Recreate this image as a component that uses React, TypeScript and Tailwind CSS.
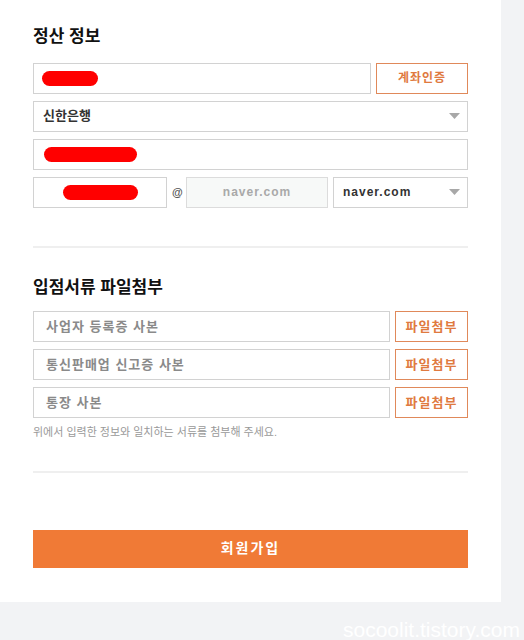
import React from 'react';

const font = { fontFamily: '"Liberation Sans", "Noto Sans CJK KR", sans-serif' };

function Redact({ w }: { w: string }) {
  return <span className={`block h-[15px] ${w} rounded-full bg-[#ff0000]`} />;
}

function Arrow() {
  return (
    <svg width="11" height="6" viewBox="0 0 11 6" className="shrink-0">
      <path d="M0 0 L11 0 L5.5 6 Z" fill="#a8a8a8" />
    </svg>
  );
}

function FileRow({ label }: { label: string }) {
  return (
    <div className="flex gap-[5px]">
      <div className="flex h-[31px] flex-1 items-center border border-[#d2d2d2] px-3 text-[13px] font-bold tracking-[1px] text-[#8a8a8a]">
        {label}
      </div>
      <button className="h-[31px] w-[73px] border border-[#e0895a] text-[13px] font-bold tracking-[1px] text-[#e07a40]">
        파일첨부
      </button>
    </div>
  );
}

export default function App() {
  return (
    <div className="h-[640px] w-[524px] overflow-hidden bg-[#f2f3f5]" style={font}>
      <div className="w-[501px] bg-white px-[33px] pt-[24px] pb-[34px]">
        {/* 정산 정보 */}
        <h2 className="text-[17px] font-bold text-[#111]">정산 정보</h2>
        <div className="mt-[13px] flex flex-col gap-[7px]">
          <div className="flex gap-[5px]">
            <div className="flex h-[31px] flex-1 items-center border border-[#d2d2d2] pl-[8px]">
              <Redact w="w-[56px]" />
            </div>
            <button className="h-[31px] w-[92px] border border-[#e0895a] text-[12px] font-bold tracking-[1px] text-[#e07a40]">
              계좌인증
            </button>
          </div>
          <div className="flex h-[31px] items-center justify-between border border-[#d2d2d2] pl-[9px] pr-[7px]">
            <span className="text-[13px] font-bold text-[#333]">신한은행</span>
            <Arrow />
          </div>
          <div className="flex h-[31px] items-center border border-[#d2d2d2] pl-[10px]">
            <Redact w="w-[93px]" />
          </div>
          <div className="flex items-center gap-[5px]">
            <div className="flex h-[31px] w-[134px] items-center border border-[#d2d2d2] pl-[29px]">
              <Redact w="w-[75px]" />
            </div>
            <span className="w-[9px] text-[11px] font-bold text-[#555]">@</span>
            <div className="flex h-[31px] w-[142px] items-center justify-center border border-[#dcdcdc] bg-[#f7f9f8] text-[12px] font-bold tracking-[1px] text-[#a9a9a9]">
              naver.com
            </div>
            <div className="flex h-[31px] flex-1 items-center justify-between border border-[#d2d2d2] pl-[9px] pr-[7px]">
              <span className="text-[12px] font-bold tracking-[1px] text-[#333]">naver.com</span>
              <Arrow />
            </div>
          </div>
        </div>

        <div className="mt-[38px] h-[2px] bg-[#efefef]" />

        {/* 입점서류 파일첨부 */}
        <h2 className="mt-[27px] text-[17px] font-bold text-[#111]">입점서류 파일첨부</h2>
        <div className="mt-[11px] flex flex-col gap-[7px]">
          <FileRow label="사업자 등록증 사본" />
          <FileRow label="통신판매업 신고증 사본" />
          <FileRow label="통장 사본" />
        </div>
        <p className="mt-[6px] text-[11px] text-[#999]">위에서 입력한 정보와 일치하는 서류를 첨부해 주세요.</p>

        <div className="mt-[30px] h-[2px] bg-[#efefef]" />

        <button className="mt-[57px] h-[38px] w-full bg-[#f07a36] text-[14px] font-bold tracking-[2px] text-white">
          회원가입
        </button>
      </div>
      <div className="flex justify-end pr-[4px] pt-[17px]">
        <span className="text-[21px] leading-none font-light text-white">socoolit.tistory.com</span>
      </div>
    </div>
  );
}
